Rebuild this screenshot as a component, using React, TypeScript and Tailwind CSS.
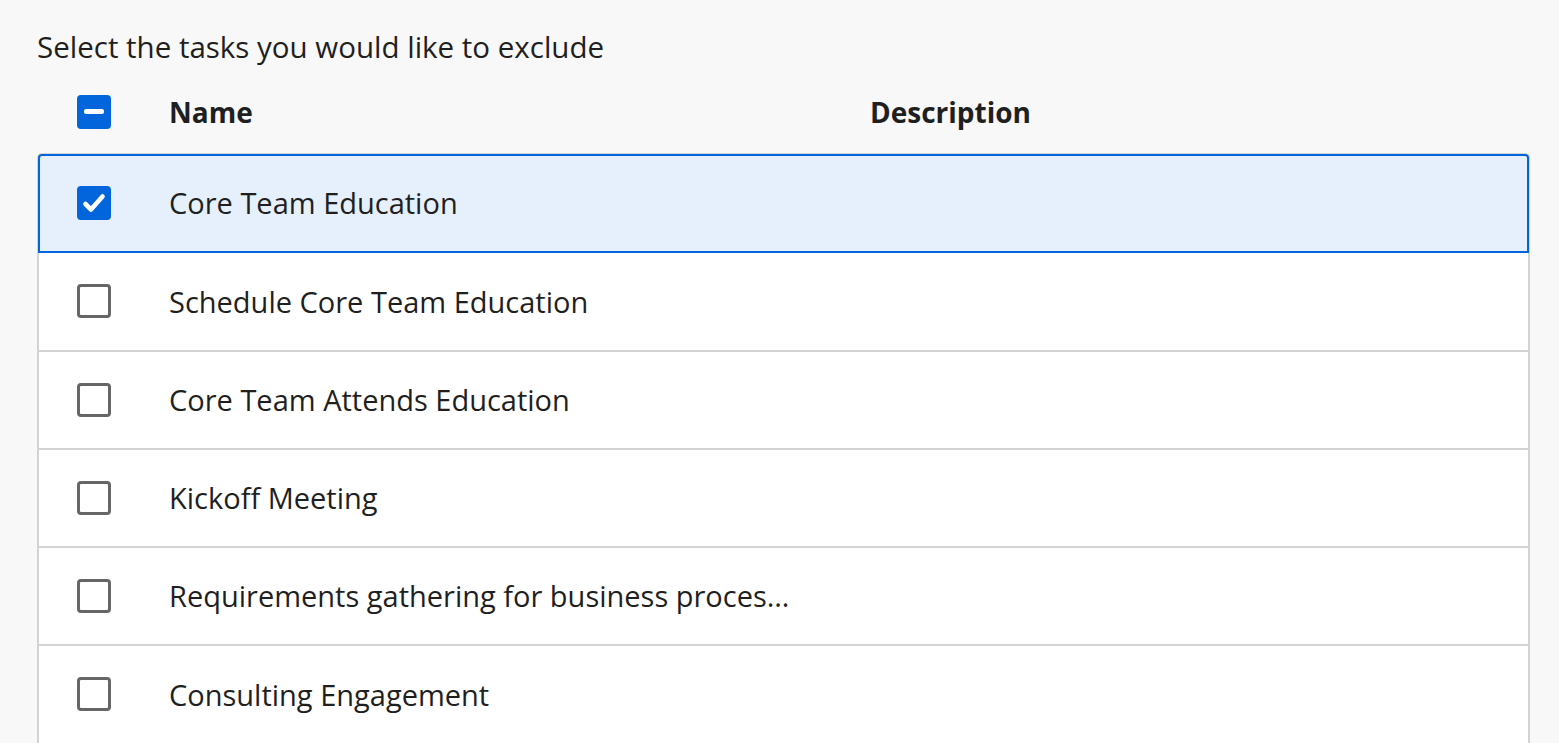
import React from "react";

const rows = [
  { name: "Core Team Education", checked: true },
  { name: "Schedule Core Team Education", checked: false },
  { name: "Core Team Attends Education", checked: false },
  { name: "Kickoff Meeting", checked: false },
  { name: "Requirements gathering for business proces…", checked: false },
  { name: "Consulting Engagement", checked: false },
];

function Box({ state }: { state: "checked" | "indeterminate" | "empty" }) {
  if (state === "empty") {
    return <div className="w-[34px] h-[34px] shrink-0 rounded-[4px] border-[3px] border-[#666666] bg-white" />;
  }
  return (
    <div className="w-[34px] h-[34px] shrink-0 rounded-[4px] bg-[#0265dc] flex items-center justify-center">
      {state === "checked" ? (
        <svg width="34" height="34" viewBox="0 0 34 34">
          <path d="M8.5 18 L14 23.5 L25.5 10.5" fill="none" stroke="white" strokeWidth="4.6" strokeLinecap="round" strokeLinejoin="round" />
        </svg>
      ) : (
        <div className="w-[20px] h-[5px] rounded-[2px] bg-white" />
      )}
    </div>
  );
}

export default function App() {
  return (
    <div className="min-h-[743px] w-full bg-[#f8f8f8] text-[#1f1f1f] overflow-hidden" style={{ fontFamily: '"Open Sans", sans-serif' }}>
      <div className="pl-[37px] pr-[29px]">
        <div className="pt-[29px] text-[29.5px] leading-[36px]">Select the tasks you would like to exclude</div>
        <div className="h-[88px] pt-[5px] flex items-center pl-[40px]">
          <Box state="indeterminate" />
          <div className="ml-[58px] w-[701px] text-[28px] font-bold">Name</div>
          <div className="text-[28px] font-bold">Description</div>
        </div>
        <div className="border-2 border-b-0 border-[#d3d3d3] rounded-t-[5px] bg-white">
          {rows.map((r, i) => (
            <div
              key={i}
              className={`relative h-[98.25px] border-b-2 border-[#d3d3d3] flex items-center pl-[38px] ${r.checked ? "bg-[#e5f0fc]" : "bg-white"} ${i === 0 ? "rounded-t-[4px]" : ""}`}
            >
              {r.checked && (
                <div className="absolute -top-[1px] -left-[1px] -right-[1px] -bottom-[2px] border-2 border-[#0265dc] rounded-t-[4px] pointer-events-none" />
              )}
              <Box state={r.checked ? "checked" : "empty"} />
              <div className="ml-[58px] w-[701px] text-[29px] whitespace-nowrap">{r.name}</div>
            </div>
          ))}
        </div>
      </div>
    </div>
  );
}
